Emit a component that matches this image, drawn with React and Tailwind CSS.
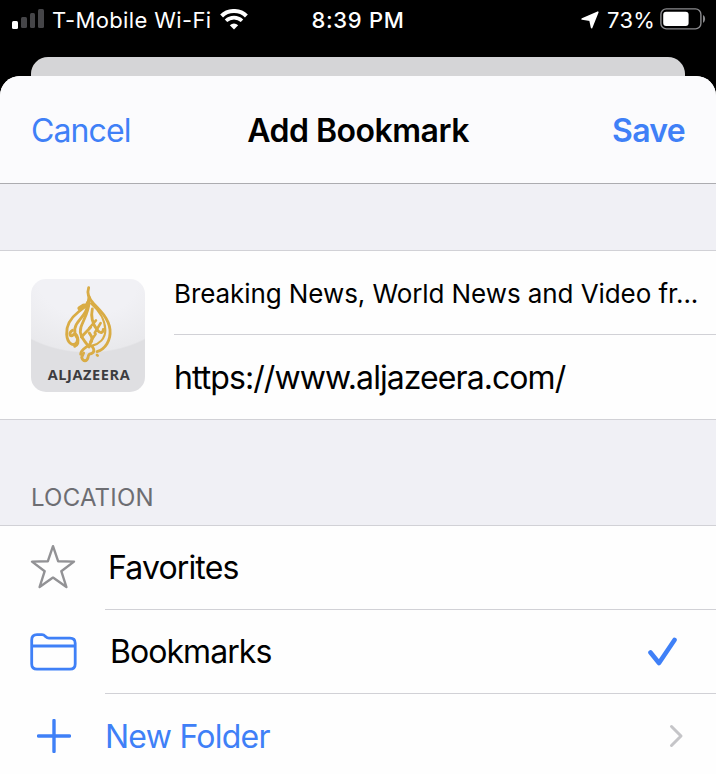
import React from "react";

const line = "bg-[#d1d1d6]";

function Signal() {
  return (
    <svg className="block" width="32" height="20" viewBox="0 0 32 20">
      <rect x="0" y="12" width="6" height="8" rx="1.5" fill="#fff" />
      <rect x="9" y="8" width="6" height="11" rx="1.5" fill="#454548" />
      <rect x="18" y="4" width="5" height="15" rx="1.5" fill="#454548" />
      <rect x="26" y="0" width="6" height="19" rx="1.5" fill="#454548" />
    </svg>
  );
}

function Wifi() {
  return (
    <svg className="block" width="28" height="21" viewBox="0 0 28 21">
      <path d="M1.6 7 C8 0.3 20 0.3 26.4 7" fill="none" stroke="#fff" strokeWidth="4" />
      <path d="M6 11.8 C10.5 7.6 17.5 7.6 22 11.8" fill="none" stroke="#fff" strokeWidth="3.6" />
      <path d="M14 20.6 L9.8 16.3 Q14 12.6 18.2 16.3 Z" fill="#fff" />
    </svg>
  );
}

function Battery() {
  return (
    <svg className="block" width="46" height="22" viewBox="0 0 46 22">
      <rect x="0.9" y="0.9" width="40" height="20" rx="5.5" fill="none" stroke="#8a8a8d" strokeWidth="1.4" />
      <rect x="3.2" y="3.8" width="25.4" height="14.2" rx="3" fill="#fff" />
      <path d="M43 7 C45.8 8.2 45.8 13.6 43 14.8 Z" fill="#8a8a8d" />
    </svg>
  );
}

function Emblem() {
  return (
    <svg className="block" width="56" height="84" viewBox="0 0 168 252" fill="none" stroke="#d9ac45" strokeWidth="8.5" strokeLinecap="round" strokeLinejoin="round">
      <path d="M86 14 C80 32 87 48 101 62 C119 80 147 108 150 140 C153 172 136 198 111 206" />
      <path d="M87 42 C88 61 73 73 55 87 C32 105 18 127 20 154 C22 183 41 191 50 179 C58 168 49 147 40 155 C30 165 25 150 37 142" />
      <path d="M60 76 L72 69" strokeWidth="15" />
      <path d="M82 59 C84 80 73 94 60 109 C44 127 39 147 51 164 C59 176 52 187 44 190" />
      <path d="M87 57 C87 86 70 111 63 132 C55 156 73 173 87 192" />
      <path d="M64 162 L92 133 M88 150 C96 160 100 173 89 184 C79 195 62 198 62 214" />
      <path d="M93 61 C113 78 136 108 136 142 C136 168 117 183 97 188" strokeWidth="6.5" />
      <path d="M97 78 C91 105 98 123 111 140 C121 154 130 149 130 139" />
      <path d="M88 135 L108 112 M122 120 L104 150 M107 153 L91 176" strokeWidth="7.5" />
      <path d="M91 187 C101 191 106 206 96 211 C89 215 86 210 84 224 C81 236 69 237 65 223 L71 210" />
      <path d="M111 216 L113 218" strokeWidth="8" />
    </svg>
  );
}

export default function App() {
  return (
    <div className="flex h-[774px] w-[716px] flex-col overflow-hidden bg-black font-['Inter','Liberation_Sans',sans-serif] text-black">
      <header className="grid h-[57px] shrink-0 grid-cols-[1fr_auto_1fr] text-white">
        <div className="flex pl-[12px]">
          <div className="pt-[9px]"><Signal /></div>
          <span className="ml-[8px] w-[160px] pt-[5px] text-[22px] leading-[30px] tracking-[0.37px] whitespace-nowrap">T-Mobile Wi-Fi</span>
          <div className="ml-[8px] pt-[9px]"><Wifi /></div>
        </div>
        <span className="pt-[5px] text-[22px] leading-[30px] font-medium tracking-[0.7px]">8:39 PM</span>
        <div className="flex justify-end pr-[10px]">
          <svg className="mt-[11px] block" width="18" height="18" viewBox="0 0 18 18"><path d="M16.8 1.2 L10.6 16.6 L9 9.2 L1.2 8 Z" fill="#fff" stroke="#fff" strokeWidth="1.6" strokeLinejoin="round" /></svg>
          <span className="ml-[8px] pt-[5px] text-[22px] leading-[30px] tracking-[0.2px]">73%</span>
          <div className="ml-[5px] pt-[8px]"><Battery /></div>
        </div>
      </header>
      <div className="mx-[31px] h-[19px] shrink-0 rounded-t-[17px] bg-[#d5d5d7]" />
      <main className="flex flex-1 flex-col rounded-t-[20px] bg-[#fefefe]">
        <div className="grid h-[107px] shrink-0 grid-cols-[1fr_auto_1fr] items-center rounded-t-[20px] bg-[#fbfbfd] px-[31px] pt-[2px] text-[32px] leading-[40px]">
          <button className="text-left tracking-[-0.9px] text-[#3f80f7]">Cancel</button>
          <h1 className="font-semibold tracking-[-0.5px]">Add Bookmark</h1>
          <button className="text-right font-semibold tracking-[-0.7px] text-[#3f80f7]">Save</button>
        </div>
        <div className="h-[68px] shrink-0 border-t border-b border-t-[#acacb0] border-b-[#d1d1d6] bg-[#f0f0f5]" />
        <section className="flex h-[168px] shrink-0 pl-[31px]">
          <div className="mt-[28px] flex h-[113px] w-[114px] shrink-0 flex-col items-center overflow-hidden rounded-[15px] bg-[radial-gradient(ellipse_100px_74px_at_50%_0%,#f1f1f5_50%,#e9e9ec_98%,#dfdfe2_100%)] pt-[4px]">
            <Emblem />
            <span className="ml-[2px] font-['Open_Sans',sans-serif] text-[14.5px] leading-[16px] font-bold tracking-[0.6px] text-[#3c3c40]">ALJAZEERA</span>
          </div>
          <div className="ml-[29px] flex min-w-0 flex-1 flex-col">
            <div className="flex h-[83px] items-center pt-[2px] text-[26px] tracking-[-0.08px] whitespace-nowrap">Breaking News, World News and Video fr...</div>
            <div className={`h-px shrink-0 ${line}`} />
            <div className="flex h-[84px] items-center pt-[2px] text-[32px] tracking-[-0.93px] whitespace-nowrap">https://www.aljazeera.com/</div>
          </div>
        </section>
        <div className="flex h-[107px] shrink-0 items-end border-t border-b border-[#d1d1d6] bg-[#f0f0f5] pb-[11px] pl-[31px] text-[24px] leading-[32px] tracking-[0.2px] text-[#6d6d72]">LOCATION</div>
        <nav className="flex flex-col text-[32px]">
          <div className="flex h-[83px] items-center pl-[30px]">
            <svg className="mb-[2px] block" width="46" height="46" viewBox="0 0 46 46"><path d="M23 2.2 L28.2 17.3 L44 17.6 L31.3 27.2 L36.4 43 L23 33.6 L9.6 43 L14.7 27.2 L2 17.6 L17.8 17.3 Z" fill="none" stroke="#929295" strokeWidth="2.4" strokeLinejoin="round" /></svg>
            <span className="ml-[32px] pt-px tracking-[-0.85px]">Favorites</span>
          </div>
          <div className={`ml-[105px] h-px ${line}`} />
          <div className="flex h-[83px] items-center pl-[30px]">
            <svg className="block" width="47" height="38" viewBox="0 0 47 38" fill="none" stroke="#3f80f7" strokeWidth="2.8"><path d="M1.7 7 C1.7 3 3.5 1.7 7 1.7 H12 C15.5 1.7 15.5 5.2 19 5.2 H40 Q45.2 5.2 45.2 10.2 V31 Q45.2 36.2 40 36.2 H7 Q1.7 36.2 1.7 31 Z M1.7 13 H45.2" /></svg>
            <span className="ml-[33px] pt-px tracking-[-0.95px]">Bookmarks</span>
            <svg className="mr-[38px] ml-auto block" width="31" height="30" viewBox="0 0 31 30"><path d="M3.5 15.5 L12 26 L27.5 3" fill="none" stroke="#3f80f7" strokeWidth="4.6" strokeLinecap="round" strokeLinejoin="round" /></svg>
          </div>
          <div className={`ml-[105px] h-px ${line}`} />
          <div className="flex h-[84px] items-center pl-[37px] text-[#3f80f7]">
            <svg className="block" width="34" height="34" viewBox="0 0 34 34"><path d="M17 1.5 V32.5 M1.5 17 H32.5" stroke="#3f80f7" strokeWidth="3.4" strokeLinecap="round" /></svg>
            <span className="ml-[34px] pt-px tracking-[-0.75px]">New Folder</span>
            <svg className="mr-[32px] ml-auto block" width="15" height="24" viewBox="0 0 15 24"><path d="M2.5 2.5 L12 12 L2.5 21.5" fill="none" stroke="#c5c5c8" strokeWidth="3" strokeLinecap="round" strokeLinejoin="round" /></svg>
          </div>
        </nav>
      </main>
    </div>
  );
}
